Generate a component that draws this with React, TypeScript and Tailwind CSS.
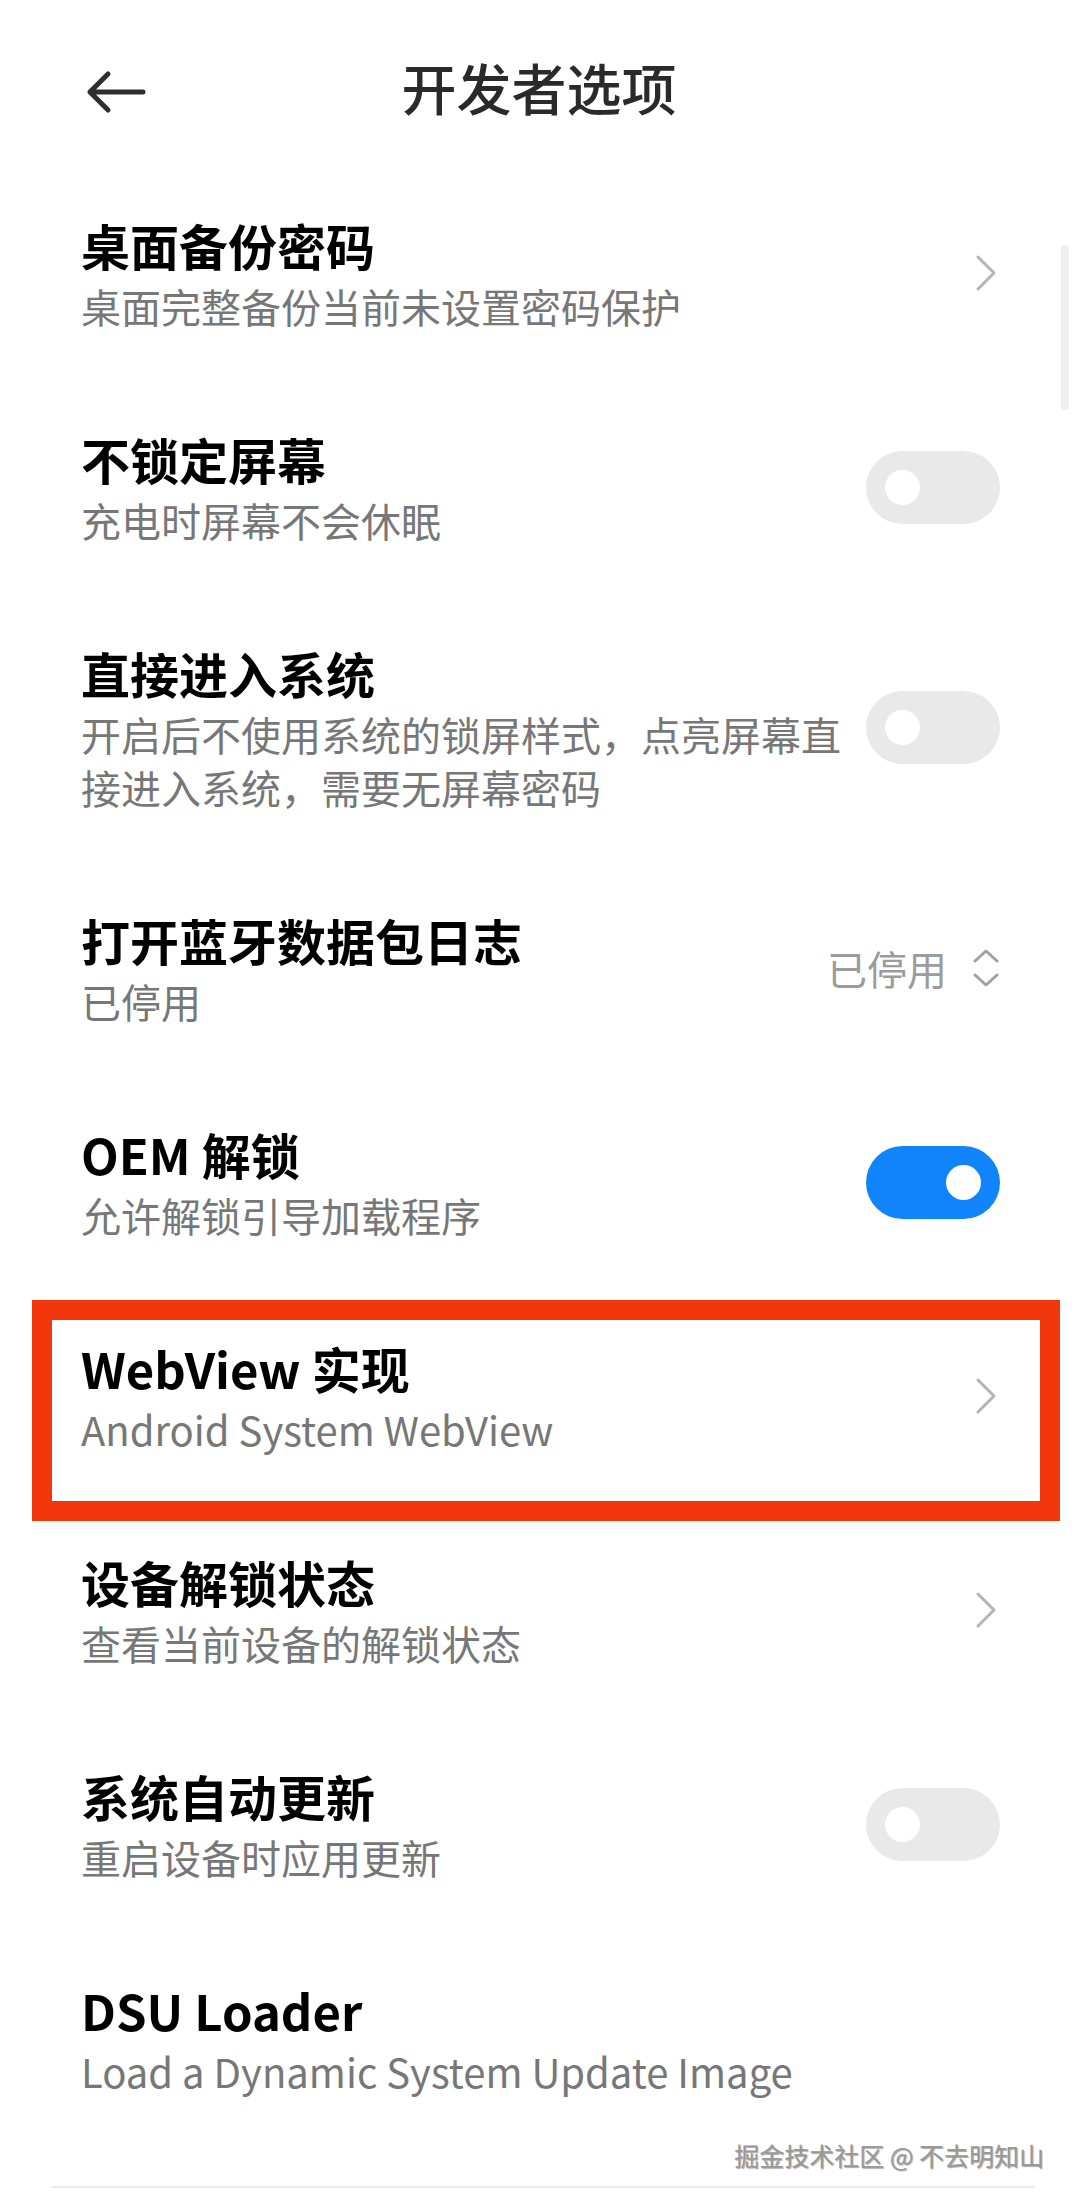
const font = "font-['Noto_Sans_CJK_SC','Noto_Sans',sans-serif]";

type Control = "chevron" | "off" | "on" | "select" | "none";

type Item = {
  title: string;
  sub: string;
  control: Control;
  value?: string;
  marked?: boolean;
};

const items: Item[] = [
  { title: "桌面备份密码", sub: "桌面完整备份当前未设置密码保护", control: "chevron" },
  { title: "不锁定屏幕", sub: "充电时屏幕不会休眠", control: "off" },
  {
    title: "直接进入系统",
    sub: "开启后不使用系统的锁屏样式，点亮屏幕直接进入系统，需要无屏幕密码",
    control: "off",
  },
  { title: "打开蓝牙数据包日志", sub: "已停用", control: "select", value: "已停用" },
  { title: "OEM 解锁", sub: "允许解锁引导加载程序", control: "on" },
  { title: "WebView 实现", sub: "Android System WebView", control: "chevron", marked: true },
  { title: "设备解锁状态", sub: "查看当前设备的解锁状态", control: "chevron" },
  { title: "系统自动更新", sub: "重启设备时应用更新", control: "off" },
  { title: "DSU Loader", sub: "Load a Dynamic System Update Image", control: "none" },
];

function Toggle({ on }: { on: boolean }) {
  return (
    <div
      className={`w-[134px] h-[73px] rounded-full flex items-center px-[19px] ${
        on ? "bg-[#0f84fb] justify-end" : "bg-[#e9e9e9] justify-start"
      }`}
    >
      <div className="w-[35px] h-[35px] rounded-full bg-white" />
    </div>
  );
}

function Chevron() {
  return (
    <svg width="24" height="40" viewBox="0 0 24 40" className="mr-[2px]">
      <path
        d="M4 4 L20 20 L4 36"
        fill="none"
        stroke="#b4b4b4"
        strokeWidth="3"
        strokeLinecap="round"
        strokeLinejoin="round"
      />
    </svg>
  );
}

function Select({ value }: { value: string }) {
  return (
    <div className="flex items-center gap-[26px]">
      <span className="whitespace-nowrap text-[40px] leading-[53px] text-[#9c9c9c]">
        {value}
      </span>
      <svg width="26" height="40" viewBox="0 0 26 40" className="mr-[1px]">
        <path
          d="M2 13 L13 3 L24 13 M2 27 L13 37 L24 27"
          fill="none"
          stroke="#a0a0a0"
          strokeWidth="3"
          strokeLinecap="round"
          strokeLinejoin="round"
        />
      </svg>
    </div>
  );
}

function Row({ item }: { item: Item }) {
  return (
    <div className="relative flex items-center gap-[9px] pl-[81px] pr-[78px] py-[47px]">
      <div className="flex-1 min-w-0 max-w-[776px]">
        <div className="text-[49px] leading-[64px] font-bold text-black">
          {item.title}
        </div>
        <div className="mt-[3px] text-[40px] leading-[53px] text-[#777777]">
          {item.sub}
        </div>
      </div>
      <div className="ml-auto shrink-0 flex items-center">
        {item.control === "chevron" && <Chevron />}
        {item.control === "off" && <Toggle on={false} />}
        {item.control === "on" && <Toggle on />}
        {item.control === "select" && <Select value={item.value ?? ""} />}
      </div>
      {item.marked && (
        <div className="absolute top-[11px] left-[32px] right-[18px] bottom-[-18px] border-[20px] border-[#f3370d]" />
      )}
    </div>
  );
}

export default function App() {
  return (
    <div className={`relative w-[1078px] h-[2203px] bg-white overflow-hidden ${font}`}>
      <header className="relative h-[166px] flex items-start justify-center pt-[54px]">
        <button className="absolute left-[84px] top-[70px]">
          <svg width="64" height="44" viewBox="0 0 64 44">
            <path
              d="M6 22 H59 M24 4 L6 22 L24 40"
              fill="none"
              stroke="#2e2e2e"
              strokeWidth="5"
              strokeLinecap="round"
              strokeLinejoin="round"
            />
          </svg>
        </button>
        <h1 className="text-[55px] leading-[64px] font-medium text-[#2a2a2a]">
          开发者选项
        </h1>
      </header>

      <main className="flex flex-col">
        {items.map((item) => (
          <Row key={item.title} item={item} />
        ))}
      </main>

      <div className="mt-[41px] ml-[52px] mr-[43px] h-[2px] bg-[#ebebeb]" />

      {/* scrollbar */}
      <div className="absolute left-[1061px] top-[245px] w-[8px] h-[165px] rounded-full bg-[#efefef]" />

      {/* watermark */}
      <div className="absolute right-[34px] top-[2135px] text-[25px] leading-[40px] text-[#999999] [text-shadow:1px_1px_1px_rgba(0,0,0,0.35)]">
        掘金技术社区 @ 不去明知山
      </div>
    </div>
  );
}
